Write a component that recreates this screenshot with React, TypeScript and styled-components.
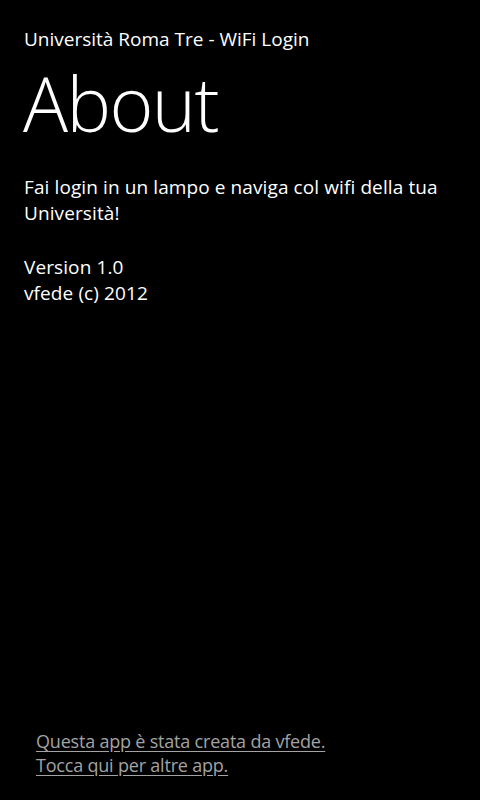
import React from 'react';
import styled, { createGlobalStyle } from 'styled-components';

const GlobalStyle = createGlobalStyle`
  html, body {
    margin: 0;
    padding: 0;
    background: #000;
  }
  #root {
    height: 800px;
  }
`;

const Page = styled.div`
  height: 800px;
  width: 480px;
  box-sizing: border-box;
  background: #000;
  color: #fff;
  font-family: 'Open Sans', 'Noto Sans', sans-serif;
  display: flex;
  flex-direction: column;
`;

const TitlePanel = styled.div`
  padding: 26px 0 0 24px;
`;

const AppTitle = styled.div`
  font-size: 19px;
  line-height: 26px;
  letter-spacing: 0;
`;

const PageTitle = styled.h1`
  margin: 11px 0 0 -1px;
  font-size: 75px;
  font-weight: 300;
  line-height: 80px;
  letter-spacing: -1.6px;
`;

const Content = styled.div`
  flex: 1;
  padding: 31px 24px 0 24px;
`;

const Paragraph = styled.p`
  margin: 0 0 28px 0;
  font-size: 19px;
  line-height: 26px;
  letter-spacing: 0.1px;
`;

const Footer = styled.div`
  padding: 0 0 23px 36px;
`;

const FooterLink = styled.a`
  display: block;
  color: #a3a3a3;
  font-size: 18px;
  line-height: 24px;
  letter-spacing: -0.2px;
  text-decoration: underline;
  text-underline-offset: 3px;
  cursor: pointer;
`;

export default function App() {
  return (
    <>
      <GlobalStyle />
      <Page>
        <TitlePanel>
          <AppTitle>Università Roma Tre - WiFi Login</AppTitle>
          <PageTitle>About</PageTitle>
        </TitlePanel>
        <Content>
          <Paragraph>
            Fai login in un lampo e naviga col wifi della tua Università!
          </Paragraph>
          <Paragraph>
            Version 1.0
            <br />
            vfede (c) 2012
          </Paragraph>
        </Content>
        <Footer>
          <FooterLink>Questa app è stata creata da vfede.</FooterLink>
          <FooterLink>Tocca qui per altre app.</FooterLink>
        </Footer>
      </Page>
    </>
  );
}
